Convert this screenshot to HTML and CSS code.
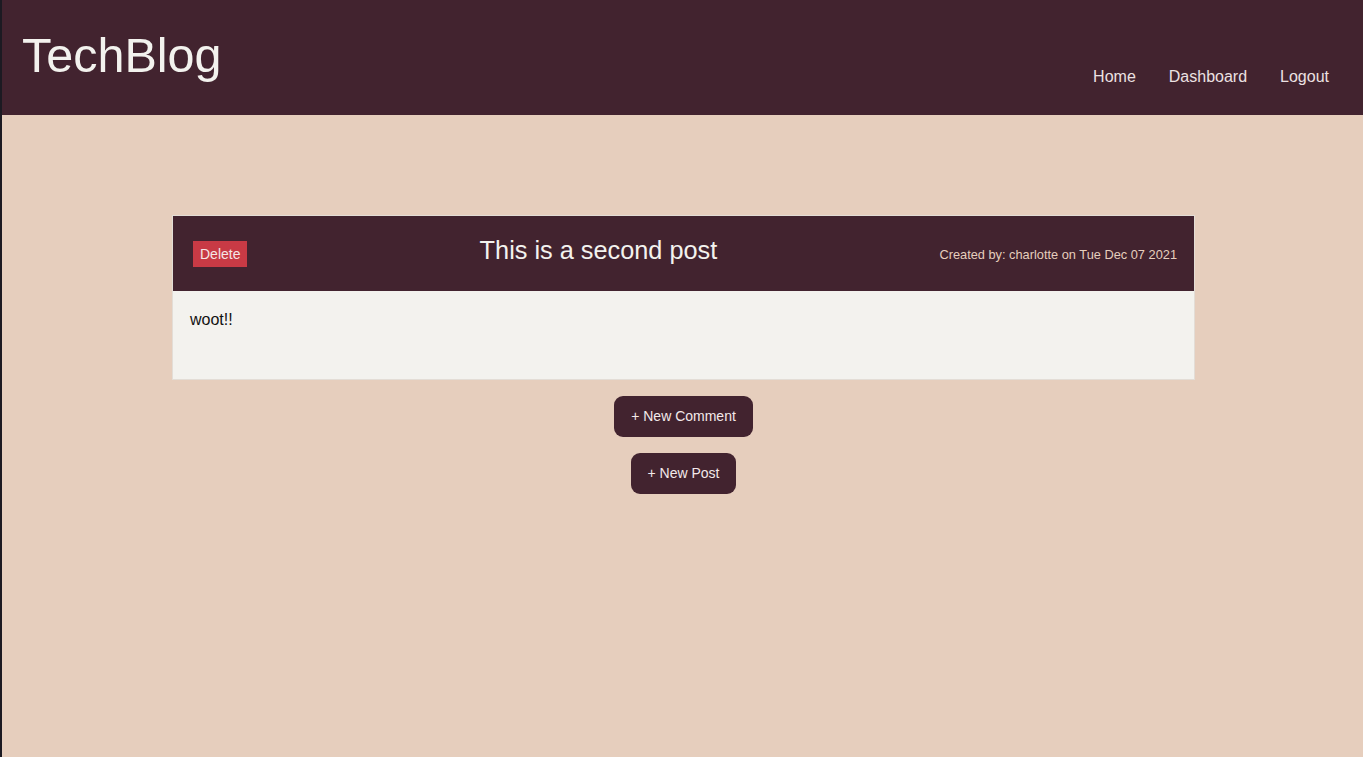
FILE: index.html
```html
<!DOCTYPE html>
<html lang="en">
<head>
<meta charset="utf-8">
<title>TechBlog</title>
<link rel="stylesheet" href="styles.css">
</head>
<body>
<header class="site-header">
  <h1 class="brand">TechBlog</h1>
  <nav class="nav">
    <a class="nav-link" href="#">Home</a>
    <a class="nav-link" href="#">Dashboard</a>
    <a class="nav-link" href="#">Logout</a>
  </nav>
</header>
<main class="main">
  <article class="post">
    <div class="post-head">
      <button class="btn-delete">Delete</button>
      <h2 class="post-title">This is a second post</h2>
      <span class="post-meta">Created by: charlotte on Tue Dec 07 2021</span>
    </div>
    <div class="post-body">
      <p class="post-text">woot!!</p>
    </div>
  </article>
  <div class="actions">
    <button class="btn-pill">+ New Comment</button>
    <button class="btn-pill">+ New Post</button>
  </div>
</main>
</body>
</html>
```

FILE: styles.css
```css
html {
  background: #1c1a22;
}
body {
  margin: 0 0 0 2px;
  min-height: 757px;
  background: #e6cebd;
  font-family: "Liberation Sans", Arial, sans-serif;
  color: #111;
}
.site-header {
  display: flex;
  justify-content: space-between;
  align-items: flex-start;
  height: 115px;
  box-sizing: border-box;
  padding: 28px 34px 0 20px;
  background: #42232f;
}
.brand {
  margin: 0;
  font-size: 48.5px;
  font-weight: normal;
  line-height: 55px;
  color: #f3f2ee;
}
.nav {
  display: flex;
  gap: 33px;
  margin-top: 40px;
}
.nav-link {
  font-size: 16px;
  line-height: 18px;
  color: #ece1e2;
  text-decoration: none;
}
.main {
  padding-top: 100px;
  padding-left: 2px;
}
.post {
  width: 1023px;
  box-sizing: border-box;
  margin: 0 auto;
  border: 1px solid #e3ddd6;
}
.post-head {
  display: flex;
  justify-content: space-between;
  align-items: center;
  height: 75px;
  padding: 0 17px 0 20px;
  background: #42232f;
}
.btn-delete {
  border: none;
  background: #c83a45;
  color: #f5e6e6;
  font-family: inherit;
  font-size: 14px;
  line-height: 16px;
  padding: 5px 7px;
  margin-top: 1px;
}
.post-title {
  margin: 0 0 6px 10px;
  font-size: 25.3px;
  font-weight: normal;
  color: #f3f2ee;
}
.post-meta {
  font-size: 12.8px;
  color: #e6cebd;
  margin-top: 2px;
}
.post-body {
  background: #f3f2ee;
  height: 88px;
  box-sizing: border-box;
  padding: 20px 17px 19px 17px;
}
.post-text {
  margin: 0;
  font-size: 16px;
  line-height: 18px;
}
.actions {
  display: flex;
  flex-direction: column;
  align-items: center;
  gap: 16px;
  margin-top: 16px;
}
.btn-pill {
  border: none;
  border-radius: 9px;
  background: #42232f;
  color: #f3e9ea;
  font-family: inherit;
  font-size: 14px;
  line-height: 17px;
  padding: 12px 17px;
}
```
